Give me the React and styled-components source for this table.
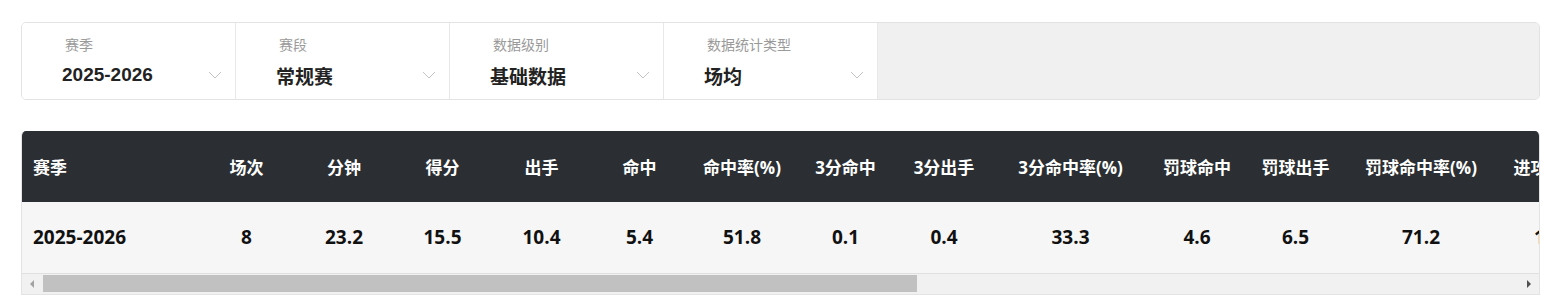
import React from 'react';
import styled, { createGlobalStyle } from 'styled-components';

const GlobalStyle = createGlobalStyle`
  body {
    margin: 0;
    background: #fff;
    font-family: "Open Sans", "Noto Sans CJK SC", sans-serif;
  }
`;

const filters = [
  { label: '赛季', value: '2025-2026', latin: true },
  { label: '赛段', value: '常规赛' },
  { label: '数据级别', value: '基础数据' },
  { label: '数据统计类型', value: '场均' },
];

const columns = [
  { label: '赛季', w: 176, left: true },
  { label: '场次', w: 97 },
  { label: '分钟', w: 98 },
  { label: '得分', w: 99 },
  { label: '出手', w: 99 },
  { label: '命中', w: 97 },
  { label: '命中率(%)', w: 108 },
  { label: '3分命中', w: 99 },
  { label: '3分出手', w: 98 },
  { label: '3分命中率(%)', w: 155 },
  { label: '罚球命中', w: 98 },
  { label: '罚球出手', w: 99 },
  { label: '罚球命中率(%)', w: 152 },
  { label: '进攻篮板', w: 101 },
  { label: '防守篮板', w: 101 },
  { label: '篮板', w: 98 },
  { label: '助攻', w: 98 },
  { label: '抢断', w: 98 },
  { label: '盖帽', w: 98 },
  { label: '失误', w: 98 },
  { label: '犯规', w: 98 },
  { label: '两双', w: 98 },
  { label: '三双', w: 98 },
  { label: '效率值', w: 103 },
];

const row = ['2025-2026', '8', '23.2', '15.5', '10.4', '5.4', '51.8', '0.1', '0.4', '33.3', '4.6', '6.5', '71.2',
  '1.3', '2.1', '3.4', '1.8', '0.9', '0.5', '1.6', '2.3', '0', '0', '14.2'];

const VISIBLE = 1517;
const TRACK = 1477;
const TOTAL = columns.reduce((s, c) => s + c.w, 0);
const THUMB = Math.round((TRACK * VISIBLE) / TOTAL);

const Chevron = () => (
  <svg width="14" height="8" viewBox="0 0 14 8" fill="none">
    <polyline points="1,1 7,7 13,1" stroke="#c4c4c4" strokeWidth="1" />
  </svg>
);

const App = () => (
  <Page>
    <GlobalStyle />
    <FilterBar>
      {filters.map((f) => (
        <FilterCell key={f.label}>
          <FilterLabel>{f.label}</FilterLabel>
          <FilterValueRow>
            <FilterValue $latin={f.latin}>{f.value}</FilterValue>
            <Chevron />
          </FilterValueRow>
        </FilterCell>
      ))}
      <FilterFill />
    </FilterBar>

    <TableBox>
      <TableViewport>
        <StatsTable style={{ width: TOTAL }}>
          <thead>
            <tr>
              {columns.map((c) => (
                <HeadCell key={c.label} $w={c.w} $left={c.left}>{c.label}</HeadCell>
              ))}
            </tr>
          </thead>
          <tbody>
            <tr>
              {row.map((v, i) => (
                <DataCell key={i} $left={columns[i].left}>{v}</DataCell>
              ))}
            </tr>
          </tbody>
        </StatsTable>
      </TableViewport>
      <ScrollBar>
        <ScrollButton>
          <Arrow $dir="left" $disabled />
        </ScrollButton>
        <ScrollTrack>
          <ScrollThumb $w={THUMB} />
        </ScrollTrack>
        <ScrollButton>
          <Arrow $dir="right" />
        </ScrollButton>
      </ScrollBar>
    </TableBox>
  </Page>
);

const Page = styled.div`
  padding: 22px 20px 0 21px;
`;

const FilterBar = styled.div`
  display: flex;
  height: 78px;
  box-sizing: border-box;
  border: 1px solid #e3e3e3;
  border-radius: 5px;
  overflow: hidden;
`;

const FilterCell = styled.div`
  width: 214px;
  box-sizing: border-box;
  border-right: 1px solid #e8e8e8;
  padding: 11px 13px 0 40px;
  display: flex;
  flex-direction: column;
  gap: 7px;
  background: #fff;
`;

const FilterLabel = styled.div`
  font-family: "Noto Sans CJK SC", sans-serif;
  font-size: 14px;
  line-height: 20px;
  color: #9a9a9a;
  padding-left: 3px;
`;

const FilterValueRow = styled.div`
  display: flex;
  align-items: center;
  justify-content: space-between;
  height: 28px;
`;

const FilterValue = styled.span`
  font-family: ${(p) => (p.$latin ? '"Liberation Sans", Arial' : '"Noto Sans CJK SC"')}, sans-serif;
  font-size: 19px;
  font-weight: 700;
  color: #222;
`;

const FilterFill = styled.div`
  flex: 1;
  background: #f0f0f0;
`;

const TableBox = styled.div`
  margin-top: 31px;
  border: 1px solid #e3e3e3;
  border-top: 0;
  border-radius: 5px 5px 0 0;
  overflow: hidden;
`;

const TableViewport = styled.div`
  overflow: hidden;
`;

const StatsTable = styled.table`
  table-layout: fixed;
  border-collapse: collapse;
  white-space: nowrap;
`;

const HeadCell = styled.th`
  width: ${(p) => p.$w}px;
  height: 71px;
  padding: 0 0 0 ${(p) => (p.$left ? '11px' : '0')};
  box-sizing: border-box;
  background: #2b2f33;
  color: #fff;
  font-size: 17px;
  font-weight: 700;
  text-align: ${(p) => (p.$left ? 'left' : 'center')};
`;

const DataCell = styled.td`
  height: 71px;
  padding: 0 0 0 ${(p) => (p.$left ? '11px' : '0')};
  box-sizing: border-box;
  background: #f6f6f6;
  border-bottom: 1px solid #e0e0e0;
  color: #111;
  font-size: 19px;
  font-weight: 700;
  text-align: ${(p) => (p.$left ? 'left' : 'center')};
`;

const ScrollBar = styled.div`
  display: flex;
  height: 20px;
  background: #f1f1f1;
`;

const ScrollButton = styled.div`
  width: 20px;
  display: flex;
  align-items: center;
  justify-content: center;
`;

const Arrow = styled.span`
  width: 0;
  height: 0;
  border-top: 4px solid transparent;
  border-bottom: 4px solid transparent;
  ${(p) =>
    p.$dir === 'left'
      ? `border-right: 4px solid ${p.$disabled ? '#a3a3a3' : '#505050'};`
      : `border-left: 4px solid ${p.$disabled ? '#a3a3a3' : '#505050'};`}
`;

const ScrollTrack = styled.div`
  flex: 1;
  display: flex;
  align-items: center;
`;

const ScrollThumb = styled.div`
  width: ${(p) => p.$w}px;
  height: 17px;
  margin-left: 1px;
  background: #c1c1c1;
`;

export default App;
